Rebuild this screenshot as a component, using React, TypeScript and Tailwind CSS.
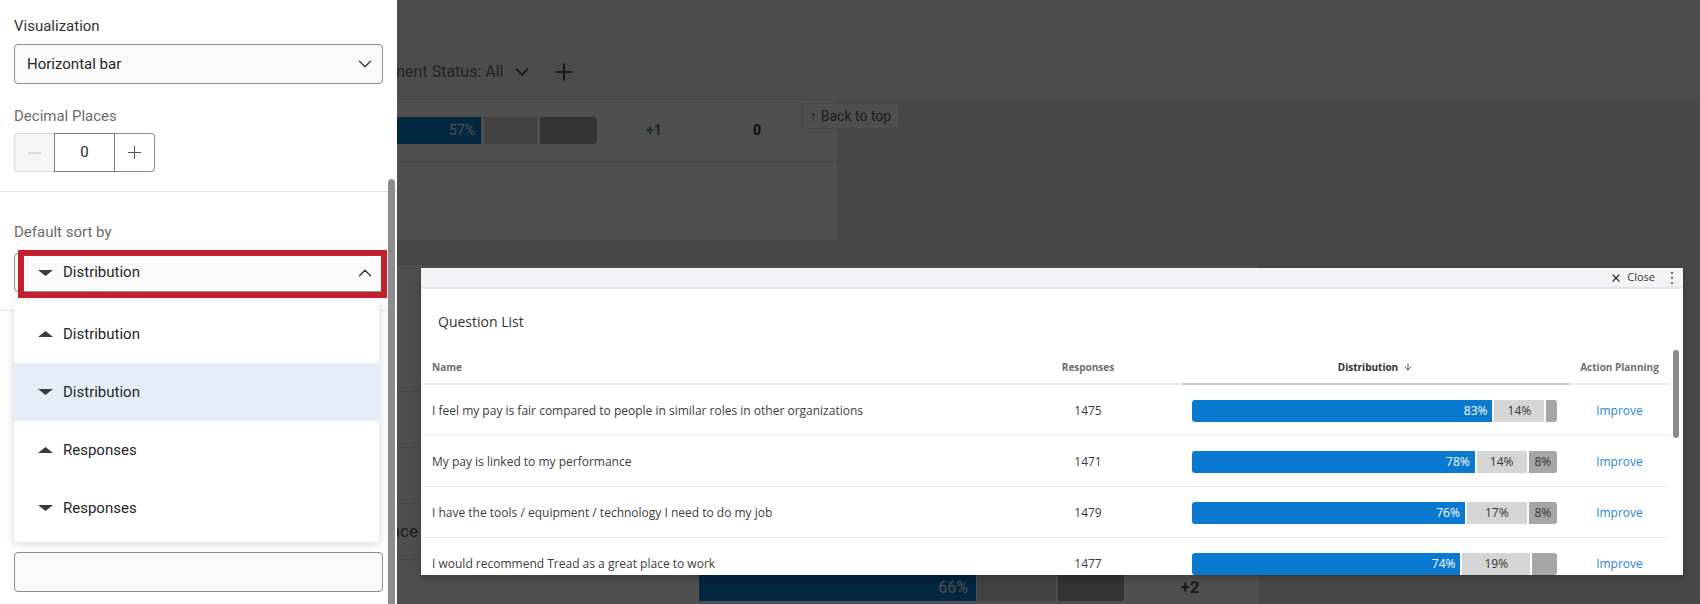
import React from 'react';
import { ChevronDown, ChevronUp, Plus, X, ArrowDown } from 'lucide-react';

type Question = {
  name: string;
  responses: number;
  dist: number[];
  labels: (string | null)[];
};

const questions: Question[] = [
  {
    name: 'I feel my pay is fair compared to people in similar roles in other organizations',
    responses: 1475,
    dist: [83, 14, 3],
    labels: ['83%', '14%', null],
  },
  {
    name: 'My pay is linked to my performance',
    responses: 1471,
    dist: [78, 14, 8],
    labels: ['78%', '14%', '8%'],
  },
  {
    name: 'I have the tools / equipment / technology I need to do my job',
    responses: 1479,
    dist: [76, 17, 8],
    labels: ['76%', '17%', '8%'],
  },
  {
    name: 'I would recommend Tread as a great place to work',
    responses: 1477,
    dist: [74, 19, 7],
    labels: ['74%', '19%', null],
  },
];

const sortOptions = [
  { label: 'Distribution', up: true },
  { label: 'Distribution', up: false, active: true },
  { label: 'Responses', up: true },
  { label: 'Responses', up: false },
];

function Triangle({ up }: { up: boolean }) {
  return (
    <svg width="15" height="6" viewBox="0 0 15 6" className="shrink-0">
      <path d={up ? 'M0 6 L7.5 0 L15 6 Z' : 'M0 0 L7.5 6 L15 0 Z'} fill="#3a3a3a" />
    </svg>
  );
}

function BackgroundPage() {
  return (
    <div className="h-full w-full bg-[#e9e9e9]">
      {/* filter bar */}
      <div className="h-[100px] bg-[#f4f4f4] pt-[60px]">
        <div className="flex h-[24px] items-center pl-[338px] text-[16px] text-[#6e6e6e]">
          <span>Engagement Status: All</span>
          <ChevronDown size={22} strokeWidth={2} className="ml-[8px] text-[#5a5a5a]" />
          <Plus size={26} strokeWidth={2} className="ml-[18px] text-[#5a5a5a]" />
        </div>
      </div>

      <div className="relative px-[20px]">
        {/* card with summary bar */}
        <div className="h-[140px] w-[817px] bg-white shadow-[0_0_0_1px_#dedede]">
          <div className="flex h-[62px] items-center border-b border-[#e2e2e2] pl-[279px]">
            <div className="flex h-[27px] gap-[3px]">
              <div className="flex w-[182px] items-center justify-end bg-[#0a7ad1] pr-[6px] text-[14px] text-white">57%</div>
              <div className="w-[53px] bg-[#d6d6d6]" />
              <div className="w-[57px] rounded-r-[4px] bg-[#a6a6a6]" />
            </div>
            <div className="w-[114px] text-center text-[14px] font-bold text-[#2f9e44]">+1</div>
            <div className="w-[92px] text-center text-[14px] font-bold text-[#333]">0</div>
          </div>
        </div>

        <button className="absolute left-[802px] top-[3px] flex h-[26px] w-[97px] items-center justify-center gap-[4px] rounded-[4px] border border-[#e4e4e4] bg-white text-[14px] text-[#5a5a5a]">
          <span>↑</span>
          <span>Back to top</span>
        </button>

        {/* card with question table */}
        <div className="mt-[25px] w-[1239px] bg-white shadow-[0_0_0_1px_#dedede]">
          <div className="h-[126px]" />
          <div className="h-[56px] border-t border-[#e2e2e2]" />
          <div className="h-[56px] border-t border-[#e2e2e2]" />
          <div className="flex h-[56px] items-center border-t border-[#e2e2e2]">
            <div className="w-[398px] text-right text-[17px] text-[#555]">I would recommend Tread as a great place</div>
          </div>
          <div className="flex h-[56px] items-center border-t border-[#e2e2e2] pl-[679px]">
            <div className="flex h-[27px] gap-[1px]">
              <div className="flex w-[277px] items-center justify-end bg-[#0a7ad1] pr-[8px] text-[16px] text-white">66%</div>
              <div className="w-[79px] bg-[#d6d6d6]" />
              <div className="ml-[1px] w-[66px] rounded-r-[4px] bg-[#a6a6a6]" />
            </div>
            <div className="w-[132px] text-center text-[17px] font-bold text-[#555]">+2</div>
          </div>
        </div>
      </div>
    </div>
  );
}

function SidePanel() {
  return (
    <aside className="absolute left-0 top-0 h-full w-[397px] bg-white">
      <div className="px-[14px] pt-[16px]">
        <div className="h-[20px] text-[15px] leading-[20px] text-[#333]">Visualization</div>
        <div className="mt-[8px] flex h-[40px] items-center justify-between rounded-[4px] border border-[#8c8c8c] bg-[#fafafa] pl-[12px] pr-[6px] text-[15px] text-[#262626]">
          <span>Horizontal bar</span>
          <ChevronDown size={22} strokeWidth={1.4} className="text-[#333]" />
        </div>

        <div className="mt-[22px] h-[20px] text-[15px] leading-[20px] text-[#6b6b6b]">Decimal Places</div>
        <div className="mt-[7px] flex h-[39px] w-[141px]">
          <div className="flex w-[40px] items-center justify-center rounded-l-[4px] border border-r-0 border-[#dadada] bg-[#f5f5f5]">
            <svg width="13" height="2" viewBox="0 0 13 2">
              <line x1="0" y1="1" x2="13" y2="1" stroke="#c4c4c4" strokeWidth="1" />
            </svg>
          </div>
          <div className="flex w-[61px] items-center justify-center border border-[#7a7a7a] bg-white text-[15px] text-[#262626]">0</div>
          <div className="flex w-[40px] items-center justify-center rounded-r-[4px] border border-l-0 border-[#8c8c8c] bg-white">
            <svg width="13" height="13" viewBox="0 0 13 13">
              <line x1="0" y1="6.5" x2="13" y2="6.5" stroke="#555" strokeWidth="1" />
              <line x1="6.5" y1="0" x2="6.5" y2="13" stroke="#555" strokeWidth="1" />
            </svg>
          </div>
        </div>
      </div>

      <div className="mt-[19px] border-t border-[#e4e4e4]" />

      <div className="px-[14px]">
        <div className="mt-[30px] h-[20px] text-[15px] leading-[20px] text-[#6b6b6b]">Default sort by</div>
        <div className="mt-[11px] flex h-[39px] items-center justify-between rounded-[4px] border border-[#8c8c8c] bg-[#fafafa] pl-[23px] pr-[6px] text-[15px] text-[#262626]">
          <div className="flex items-center gap-[10px]">
            <Triangle up={false} />
            <span>Distribution</span>
          </div>
          <ChevronUp size={22} strokeWidth={1.4} className="text-[#333]" />
        </div>
      </div>

      <div className="mt-[18px] border-t border-[#e4e4e4]" />

      <div className="px-[14px]">
        <div className="mt-[208px] h-[20px] text-[15px] leading-[20px] text-[#6b6b6b]">Spacing</div>
        <div className="mt-[13px] h-[40px] rounded-[4px] border border-[#8c8c8c] bg-[#fafafa]" />
      </div>

      {/* sort dropdown menu */}
      <div className="absolute left-[14px] top-[301px] w-[365px] rounded-[4px] bg-white py-[4px] pb-[5px] shadow-[0_2px_10px_rgba(0,0,0,0.16)]">
        {sortOptions.map((opt, i) => (
          <div
            key={i}
            className={`flex h-[58px] items-center gap-[10px] pl-[24px] text-[15px] text-[#262626] ${
              opt.active ? 'bg-[#e5eef8]' : ''
            }`}
          >
            <Triangle up={opt.up} />
            <span>{opt.label}</span>
          </div>
        ))}
      </div>

      {/* annotation highlight */}
      <div className="absolute left-[18px] top-[250px] h-[48px] w-[369px] border-[6px] border-[#c3202f]" />

      {/* scrollbar thumb */}
      <div className="absolute bottom-0 left-[388px] top-[179px] w-[7px] rounded-t-full bg-[#8d8d8d]" />
    </aside>
  );
}

function DistributionBar({ q }: { q: Question }) {
  const colors = ['bg-[#0a7ad1] text-white justify-end pr-[5px]', 'bg-[#d5d5d5] text-[#333] justify-center', 'bg-[#a6a6a6] text-[#333] justify-center'];
  return (
    <div className="flex h-[22px] w-full gap-[2px]">
      {q.dist.map((p, i) => (
        <div
          key={i}
          className={`flex items-center text-[12px] ${colors[i]} ${i === 0 ? 'rounded-l-[3px]' : ''} ${
            i === q.dist.length - 1 ? 'rounded-r-[3px]' : ''
          }`}
          style={{ flexGrow: p, flexBasis: 0 }}
        >
          {q.labels[i]}
        </div>
      ))}
    </div>
  );
}

function QuestionModal() {
  return (
    <div className="absolute left-[421px] top-[268px] h-[307px] w-[1262px] overflow-hidden bg-white font-['Open_Sans',sans-serif] shadow-[0_2px_8px_rgba(0,0,0,0.3)]">
      <div className="flex h-[21px] items-center justify-end border-b-2 border-[#e3e3e8] bg-[#f3f3f6] pr-[10px] text-[11px] text-[#333]">
        <X size={12} strokeWidth={2.75} className="text-[#333]" />
        <span className="ml-[5px]">Close</span>
        <svg width="2" height="12" viewBox="0 0 2 12" className="ml-[16px]">
          <circle cx="1" cy="1" r="1" fill="#444" />
          <circle cx="1" cy="6" r="1" fill="#444" />
          <circle cx="1" cy="11" r="1" fill="#444" />
        </svg>
      </div>

      <div className="flex h-[64px] items-center pl-[17px] text-[14px] text-[#333]">Question List</div>

      <div className="w-[1249px]">
        <div className="flex h-[32px] text-[10px] font-bold">
          <div className="flex w-[573px] items-center border-b-2 border-[#ebebeb] pb-[2px] pl-[11px] text-[#6e6e6e]">Name</div>
          <div className="flex w-[188px] items-center justify-center border-b-2 border-[#ebebeb] pb-[2px] text-[#6e6e6e]">Responses</div>
          <div className="flex w-[387px] items-center justify-center gap-[5px] border-b-2 border-[#c6c6c6] pb-[2px] text-[#333]">
            <span>Distribution</span>
            <ArrowDown size={10} strokeWidth={2} />
          </div>
          <div className="flex w-[101px] items-center justify-center border-b-2 border-[#ebebeb] pb-[2px] text-[#6e6e6e]">Action Planning</div>
        </div>

        {questions.map((q) => (
          <div key={q.name} className="flex h-[51px] items-center border-b border-[#ececec] pt-[1px] text-[12px] text-[#3c3c3c]">
            <div className="w-[573px] pl-[11px]">{q.name}</div>
            <div className="w-[188px] text-center">{q.responses}</div>
            <div className="w-[387px] pl-[10px] pr-[12px]">
              <DistributionBar q={q} />
            </div>
            <div className="w-[101px] text-center text-[#2a83d6]">Improve</div>
          </div>
        ))}
      </div>

      <div className="absolute left-[1252px] top-[82px] h-[88px] w-[6px] rounded-full bg-[#8b8b8b]" />
    </div>
  );
}

export default function App() {
  return (
    <div className="relative h-[604px] w-[1700px] overflow-hidden font-['Roboto',sans-serif]">
      <BackgroundPage />
      <div className="absolute inset-0 bg-black/[0.69]" />
      <SidePanel />
      <QuestionModal />
    </div>
  );
}
